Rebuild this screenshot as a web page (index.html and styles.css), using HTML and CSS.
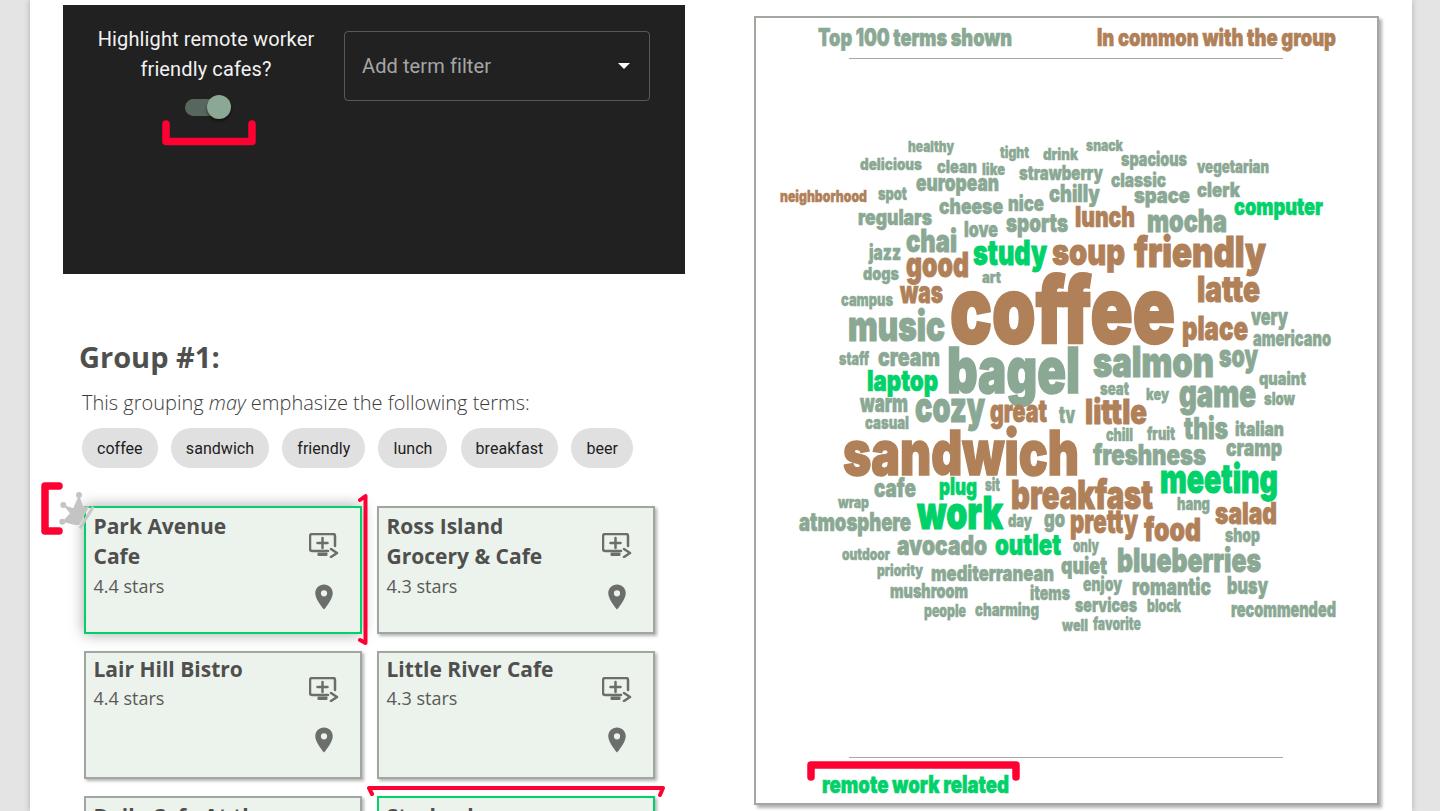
FILE: index.html
```html
<!DOCTYPE html>
<html lang="en">
<head>
    <meta charset="UTF-8">
    <meta name="viewport" content="width=device-width, initial-scale=1.0">
    <title>Cafe Groups</title>
    <link rel="stylesheet" href="styles.css">
</head>
<body>
    <svg class="icon-defs" width="0" height="0">
        <symbol id="icon-compare" viewBox="0 0 30 25">
            <path class="line" d="M19 18H3a2 2 0 0 1-2-2V3a2 2 0 0 1 2-2h21a2 2 0 0 1 2 2v10"/>
            <path class="line" d="M13.5 5v10M8.5 10h10"/>
            <path class="line" d="M22 16l6 4-6 4"/>
            <rect x="8.5" y="19.5" width="10" height="3.5" rx="1"/>
        </symbol>
        <symbol id="icon-pin" viewBox="0 0 24 24">
            <path d="M12 2C8.13 2 5 5.13 5 9c0 5.25 7 13 7 13s7-7.75 7-13c0-3.87-3.13-7-7-7zm0 9.5a2.5 2.5 0 0 1 0-5 2.5 2.5 0 0 1 0 5z"/>
        </symbol>
    </svg>

    <div class="sheet">
        <div class="left-col">
            <!-- Filter controls -->
            <div class="panel">
                <div class="toggle-block">
                    <p>Highlight remote worker friendly cafes?</p>
                    <div class="switch"><span class="knob"></span></div>
                </div>
                <div class="select">
                    <span>Add term filter</span>
                    <span class="arrow"></span>
                </div>
            </div>

            <h2>Group #1:</h2>
            <p class="terms-intro">This grouping <em>may</em> emphasize the following terms:</p>
            <div class="chips">
                <span class="chip">coffee</span>
                <span class="chip">sandwich</span>
                <span class="chip">friendly</span>
                <span class="chip">lunch</span>
                <span class="chip">breakfast</span>
                <span class="chip">beer</span>
            </div>

            <!-- Cafe cards -->
            <div class="cards">
                <div class="card highlight selected">
                    <svg class="crown" viewBox="0 0 40 42">
                        <path d="M21 5l4.300 11.700 6-.7L21.300 35H17L4.300 31.700 12 23.300 5.300 15l10 3.300z"/>
                        <circle cx="21" cy="5" r="3"/>
                        <circle cx="5.300" cy="15" r="3"/>
                        <circle cx="4.300" cy="31.700" r="3"/>
                        <path class="band" d="M35.300 16.700L22 38.300"/>
                    </svg>
                    <div class="card-text">
                        <h3>Park Avenue Cafe</h3>
                        <p>4.4 stars</p>
                    </div>
                    <div class="card-icons">
                        <svg class="compare"><use href="#icon-compare"/></svg>
                        <svg class="pin"><use href="#icon-pin"/></svg>
                    </div>
                </div>
                <div class="card">
                    <div class="card-text">
                        <h3>Ross Island Grocery &amp; Cafe</h3>
                        <p>4.3 stars</p>
                    </div>
                    <div class="card-icons">
                        <svg class="compare"><use href="#icon-compare"/></svg>
                        <svg class="pin"><use href="#icon-pin"/></svg>
                    </div>
                </div>
                <div class="card single">
                    <div class="card-text">
                        <h3>Lair Hill Bistro</h3>
                        <p>4.4 stars</p>
                    </div>
                    <div class="card-icons">
                        <svg class="compare"><use href="#icon-compare"/></svg>
                        <svg class="pin"><use href="#icon-pin"/></svg>
                    </div>
                </div>
                <div class="card single">
                    <div class="card-text">
                        <h3>Little River Cafe</h3>
                        <p>4.3 stars</p>
                    </div>
                    <div class="card-icons">
                        <svg class="compare"><use href="#icon-compare"/></svg>
                        <svg class="pin"><use href="#icon-pin"/></svg>
                    </div>
                </div>
                <div class="card">
                    <div class="card-text">
                        <h3>Daily Cafe At the Water</h3>
                        <p>4.2 stars</p>
                    </div>
                </div>
                <div class="card highlight">
                    <div class="card-text">
                        <h3>Starbucks</h3>
                        <p>4.2 stars</p>
                    </div>
                </div>
            </div>
        </div>

        <!-- Word cloud: every word sits at its own spot, so x/y/size are the data -->
        <div class="cloud-box">
            <svg class="cloud" viewBox="756 18 621 785" lengthAdjust="spacingAndGlyphs">
                <line class="rule" x1="849" y1="58.500" x2="1283" y2="58.500"/>
                <line class="rule" x1="849" y1="757.500" x2="1283" y2="757.500"/>
                <text class="sage" x="818" y="46" font-size="24" textLength="194" lengthAdjust="spacingAndGlyphs">Top 100 terms shown</text>
                <text class="tan" x="1097" y="46" font-size="24" textLength="239" lengthAdjust="spacingAndGlyphs">In common with the group</text>
                <text class="green" x="822" y="793" font-size="24" textLength="187" lengthAdjust="spacingAndGlyphs">remote work related</text>

                <text class="sage" x="908" y="152" font-size="15" textLength="46" lengthAdjust="spacingAndGlyphs">healthy</text>
                <text class="sage" x="860" y="170" font-size="16" textLength="62" lengthAdjust="spacingAndGlyphs">delicious</text>
                <text class="sage" x="937" y="173" font-size="18" textLength="40" lengthAdjust="spacingAndGlyphs">clean</text>
                <text class="sage" x="982" y="175" font-size="16" textLength="23" lengthAdjust="spacingAndGlyphs">like</text>
                <text class="sage" x="1000" y="158" font-size="15" textLength="29" lengthAdjust="spacingAndGlyphs">tight</text>
                <text class="sage" x="1043" y="160" font-size="16" textLength="35" lengthAdjust="spacingAndGlyphs">drink</text>
                <text class="sage" x="1086" y="151" font-size="15" textLength="37" lengthAdjust="spacingAndGlyphs">snack</text>
                <text class="sage" x="1019" y="180" font-size="20" textLength="84" lengthAdjust="spacingAndGlyphs">strawberry</text>
                <text class="sage" x="1121" y="166" font-size="19" textLength="66" lengthAdjust="spacingAndGlyphs">spacious</text>
                <text class="sage" x="1197" y="173" font-size="17" textLength="72" lengthAdjust="spacingAndGlyphs">vegetarian</text>
                <text class="sage" x="1111" y="187" font-size="19" textLength="55" lengthAdjust="spacingAndGlyphs">classic</text>
                <text class="sage" x="916" y="191" font-size="24" textLength="83" lengthAdjust="spacingAndGlyphs">european</text>
                <text class="sage" x="1049" y="202" font-size="24" textLength="51" lengthAdjust="spacingAndGlyphs">chilly</text>
                <text class="sage" x="1197" y="197" font-size="20" textLength="43" lengthAdjust="spacingAndGlyphs">clerk</text>
                <text class="sage" x="1134" y="203" font-size="22" textLength="56" lengthAdjust="spacingAndGlyphs">space</text>
                <text class="tan" x="780" y="202" font-size="16" textLength="87" lengthAdjust="spacingAndGlyphs">neighborhood</text>
                <text class="sage" x="878" y="200" font-size="17" textLength="29" lengthAdjust="spacingAndGlyphs">spot</text>
                <text class="sage" x="939" y="214" font-size="22" textLength="64" lengthAdjust="spacingAndGlyphs">cheese</text>
                <text class="sage" x="1008" y="211" font-size="21" textLength="36" lengthAdjust="spacingAndGlyphs">nice</text>
                <text class="green" x="1234" y="215" font-size="24" textLength="89" lengthAdjust="spacingAndGlyphs">computer</text>
                <text class="sage" x="858" y="225" font-size="22" textLength="74" lengthAdjust="spacingAndGlyphs">regulars</text>
                <text class="tan" x="1075" y="227" font-size="28" textLength="60" lengthAdjust="spacingAndGlyphs">lunch</text>
                <text class="sage" x="1147" y="232" font-size="31" textLength="80" lengthAdjust="spacingAndGlyphs">mocha</text>
                <text class="sage" x="1006" y="232" font-size="26" textLength="62" lengthAdjust="spacingAndGlyphs">sports</text>
                <text class="sage" x="964" y="237" font-size="21" textLength="34" lengthAdjust="spacingAndGlyphs">love</text>
                <text class="sage" x="906" y="252" font-size="31" textLength="51" lengthAdjust="spacingAndGlyphs">chai</text>
                <text class="green" x="973" y="265" font-size="34" textLength="74" lengthAdjust="spacingAndGlyphs">study</text>
                <text class="tan" x="1052" y="265" font-size="37" textLength="73" lengthAdjust="spacingAndGlyphs">soup</text>
                <text class="tan" x="1134" y="267" font-size="42" textLength="132" lengthAdjust="spacingAndGlyphs">friendly</text>
                <text class="sage" x="869" y="260" font-size="21" textLength="32" lengthAdjust="spacingAndGlyphs">jazz</text>
                <text class="sage" x="863" y="280" font-size="18" textLength="36" lengthAdjust="spacingAndGlyphs">dogs</text>
                <text class="tan" x="906" y="277" font-size="34" textLength="63" lengthAdjust="spacingAndGlyphs">good</text>
                <text class="sage" x="982" y="283" font-size="15" textLength="19" lengthAdjust="spacingAndGlyphs">art</text>

                <text class="tan" x="950" y="343" font-size="92" textLength="225" lengthAdjust="spacingAndGlyphs">coffee</text>
                <text class="tan" x="1197" y="302" font-size="36" textLength="63" lengthAdjust="spacingAndGlyphs">latte</text>
                <text class="tan" x="900" y="303" font-size="30" textLength="43" lengthAdjust="spacingAndGlyphs">was</text>
                <text class="sage" x="841" y="306" font-size="17" textLength="52" lengthAdjust="spacingAndGlyphs">campus</text>
                <text class="sage" x="848" y="341" font-size="42" textLength="97" lengthAdjust="spacingAndGlyphs">music</text>
                <text class="tan" x="1182" y="340" font-size="33" textLength="66" lengthAdjust="spacingAndGlyphs">place</text>
                <text class="sage" x="1251" y="325" font-size="24" textLength="37" lengthAdjust="spacingAndGlyphs">very</text>
                <text class="sage" x="1253" y="346" font-size="21" textLength="78" lengthAdjust="spacingAndGlyphs">americano</text>
                <text class="sage" x="839" y="365" font-size="18" textLength="30" lengthAdjust="spacingAndGlyphs">staff</text>
                <text class="sage" x="878" y="366" font-size="26" textLength="62" lengthAdjust="spacingAndGlyphs">cream</text>
                <text class="sage" x="947" y="393" font-size="63" textLength="133" lengthAdjust="spacingAndGlyphs">bagel</text>
                <text class="sage" x="1093" y="377" font-size="42" textLength="121" lengthAdjust="spacingAndGlyphs">salmon</text>
                <text class="sage" x="1219" y="367" font-size="31" textLength="39" lengthAdjust="spacingAndGlyphs">soy</text>
                <text class="green" x="867" y="391" font-size="29" textLength="71" lengthAdjust="spacingAndGlyphs">laptop</text>
                <text class="sage" x="1259" y="385" font-size="18" textLength="47" lengthAdjust="spacingAndGlyphs">quaint</text>
                <text class="sage" x="1100" y="395" font-size="17" textLength="29" lengthAdjust="spacingAndGlyphs">seat</text>
                <text class="sage" x="1146" y="400" font-size="16" textLength="23" lengthAdjust="spacingAndGlyphs">key</text>
                <text class="sage" x="1179" y="407" font-size="38" textLength="77" lengthAdjust="spacingAndGlyphs">game</text>
                <text class="sage" x="1264" y="405" font-size="17" textLength="31" lengthAdjust="spacingAndGlyphs">slow</text>
                <text class="sage" x="860" y="412" font-size="25" textLength="48" lengthAdjust="spacingAndGlyphs">warm</text>
                <text class="sage" x="915" y="422" font-size="42" textLength="70" lengthAdjust="spacingAndGlyphs">cozy</text>
                <text class="tan" x="990" y="422" font-size="31" textLength="57" lengthAdjust="spacingAndGlyphs">great</text>
                <text class="sage" x="1059" y="423" font-size="23" textLength="16" lengthAdjust="spacingAndGlyphs">tv</text>
                <text class="tan" x="1085" y="424" font-size="34" textLength="62" lengthAdjust="spacingAndGlyphs">little</text>
                <text class="sage" x="865" y="429" font-size="18" textLength="44" lengthAdjust="spacingAndGlyphs">casual</text>
                <text class="sage" x="1184" y="439" font-size="30" textLength="44" lengthAdjust="spacingAndGlyphs">this</text>
                <text class="sage" x="1235" y="436" font-size="20" textLength="49" lengthAdjust="spacingAndGlyphs">italian</text>
                <text class="sage" x="1106" y="441" font-size="17" textLength="27" lengthAdjust="spacingAndGlyphs">chill</text>
                <text class="sage" x="1147" y="440" font-size="17" textLength="28" lengthAdjust="spacingAndGlyphs">fruit</text>
                <text class="sage" x="1226" y="456" font-size="23" textLength="56" lengthAdjust="spacingAndGlyphs">cramp</text>
                <text class="sage" x="1093" y="465" font-size="28" textLength="113" lengthAdjust="spacingAndGlyphs">freshness</text>

                <text class="tan" x="843" y="475" font-size="62" textLength="236" lengthAdjust="spacingAndGlyphs">sandwich</text>
                <text class="sage" x="874" y="497" font-size="26" textLength="42" lengthAdjust="spacingAndGlyphs">cafe</text>
                <text class="green" x="939" y="495" font-size="24" textLength="38" lengthAdjust="spacingAndGlyphs">plug</text>
                <text class="sage" x="985" y="491" font-size="18" textLength="15" lengthAdjust="spacingAndGlyphs">sit</text>
                <text class="tan" x="1011" y="509" font-size="40" textLength="142" lengthAdjust="spacingAndGlyphs">breakfast</text>
                <text class="green" x="1160" y="493" font-size="40" textLength="118" lengthAdjust="spacingAndGlyphs">meeting</text>
                <text class="sage" x="1177" y="510" font-size="18" textLength="33" lengthAdjust="spacingAndGlyphs">hang</text>
                <text class="sage" x="838" y="508" font-size="16" textLength="31" lengthAdjust="spacingAndGlyphs">wrap</text>
                <text class="sage" x="799" y="531" font-size="26" textLength="112" lengthAdjust="spacingAndGlyphs">atmosphere</text>
                <text class="green" x="917" y="529" font-size="46" textLength="86" lengthAdjust="spacingAndGlyphs">work</text>
                <text class="sage" x="1008" y="527" font-size="18" textLength="24" lengthAdjust="spacingAndGlyphs">day</text>
                <text class="sage" x="1044" y="527" font-size="23" textLength="21" lengthAdjust="spacingAndGlyphs">go</text>
                <text class="tan" x="1070" y="533" font-size="32" textLength="68" lengthAdjust="spacingAndGlyphs">pretty</text>
                <text class="tan" x="1144" y="541" font-size="32" textLength="57" lengthAdjust="spacingAndGlyphs">food</text>
                <text class="tan" x="1215" y="524" font-size="30" textLength="62" lengthAdjust="spacingAndGlyphs">salad</text>
                <text class="sage" x="1225" y="542" font-size="19" textLength="35" lengthAdjust="spacingAndGlyphs">shop</text>
                <text class="sage" x="1073" y="552" font-size="17" textLength="26" lengthAdjust="spacingAndGlyphs">only</text>
                <text class="sage" x="842" y="560" font-size="16" textLength="48" lengthAdjust="spacingAndGlyphs">outdoor</text>
                <text class="sage" x="897" y="555" font-size="27" textLength="90" lengthAdjust="spacingAndGlyphs">avocado</text>
                <text class="green" x="995" y="555" font-size="28" textLength="66" lengthAdjust="spacingAndGlyphs">outlet</text>
                <text class="sage" x="1117" y="572" font-size="33" textLength="144" lengthAdjust="spacingAndGlyphs">blueberries</text>
                <text class="sage" x="877" y="576" font-size="15" textLength="46" lengthAdjust="spacingAndGlyphs">priority</text>
                <text class="sage" x="931" y="581" font-size="22" textLength="123" lengthAdjust="spacingAndGlyphs">mediterranean</text>
                <text class="sage" x="1061" y="574" font-size="24" textLength="46" lengthAdjust="spacingAndGlyphs">quiet</text>
                <text class="sage" x="1083" y="591" font-size="19" textLength="39" lengthAdjust="spacingAndGlyphs">enjoy</text>
                <text class="sage" x="1132" y="595" font-size="24" textLength="79" lengthAdjust="spacingAndGlyphs">romantic</text>
                <text class="sage" x="1227" y="594" font-size="24" textLength="41" lengthAdjust="spacingAndGlyphs">busy</text>
                <text class="sage" x="890" y="598" font-size="20" textLength="78" lengthAdjust="spacingAndGlyphs">mushroom</text>
                <text class="sage" x="1030" y="600" font-size="20" textLength="40" lengthAdjust="spacingAndGlyphs">items</text>
                <text class="sage" x="1075" y="612" font-size="20" textLength="62" lengthAdjust="spacingAndGlyphs">services</text>
                <text class="sage" x="1147" y="612" font-size="17" textLength="34" lengthAdjust="spacingAndGlyphs">block</text>
                <text class="sage" x="1231" y="617" font-size="21" textLength="105" lengthAdjust="spacingAndGlyphs">recommended</text>
                <text class="sage" x="924" y="617" font-size="17" textLength="42" lengthAdjust="spacingAndGlyphs">people</text>
                <text class="sage" x="975" y="616" font-size="18" textLength="64" lengthAdjust="spacingAndGlyphs">charming</text>
                <text class="sage" x="1062" y="631" font-size="16" textLength="26" lengthAdjust="spacingAndGlyphs">well</text>
                <text class="sage" x="1093" y="630" font-size="17" textLength="48" lengthAdjust="spacingAndGlyphs">favorite</text>
            </svg>
        </div>
    </div>

    <!-- Red marker strokes drawn over the page -->
    <svg class="marks" viewBox="0 0 1440 811">
        <path class="thick" d="M166 124V141.500H252V124"/>
        <path class="thick" d="M59 486H45V531H59"/>
        <path class="thin" d="M360 500L365.500 496V643L360 640"/>
        <path class="thin" d="M372 794L369 788H663L660 795"/>
        <path class="thick" d="M811 777V765H1016V777"/>
    </svg>
</body>
</html>
```

FILE: styles.css
```css
body {
    margin: 0;
    height: 811px;
    overflow: hidden;
    background-color: #e4e4e4;
    font-family: "Open Sans", sans-serif;
    color: #4f504e;
}

.icon-defs {
    position: absolute;
}

.sheet {
    display: flex;
    margin: 0 28px 0 30px;
    height: 811px;
    background-color: #fff;
    box-shadow: 0 0 6px rgba(0, 0, 0, 0.25);
    overflow: hidden;
}

.left-col {
    width: 622px;
    margin-left: 33px;
    padding-top: 5px;
    flex-shrink: 0;
}

.panel {
    display: flex;
    box-sizing: border-box;
    height: 269px;
    padding: 19px 35px 0 28px;
    background-color: #212121;
    font-family: Roboto, sans-serif;
}

.toggle-block {
    width: 230px;
    margin-right: 23px;
    text-align: center;
    flex-shrink: 0;
}

.toggle-block p {
    margin: 0;
    padding: 0 5px;
    font-size: 20px;
    line-height: 30px;
    letter-spacing: 0.13px;
    color: #f2f2f2;
}

.switch {
    position: relative;
    width: 45px;
    height: 17px;
    margin: 15px auto 0 94px;
    border-radius: 9px;
    background-color: #58675e;
}

.knob {
    position: absolute;
    top: -4px;
    right: -1px;
    width: 24px;
    height: 24px;
    border-radius: 50%;
    background-color: #8aa893;
    box-shadow: 0 2px 3px rgba(0, 0, 0, 0.5);
}

.select {
    display: flex;
    align-items: center;
    justify-content: space-between;
    box-sizing: border-box;
    width: 306px;
    height: 70px;
    margin-top: 7px;
    padding: 0 19px 0 17px;
    border: 1px solid rgba(255, 255, 255, 0.25);
    border-radius: 4px;
    font-size: 20px;
    letter-spacing: 0.1px;
    color: #a6a6a6;
}

.arrow {
    width: 0;
    height: 0;
    border-left: 6px solid transparent;
    border-right: 6px solid transparent;
    border-top: 6px solid #fff;
}

h2 {
    margin: 64px 0 0 16px;
    font-size: 29px;
    line-height: 38px;
    font-weight: 700;
}

.terms-intro {
    margin: 13px 0 0 19px;
    font-size: 20px;
    line-height: 28px;
    font-weight: 300;
    color: #3c3c3a;
}

.chips {
    display: flex;
    gap: 13.2px;
    margin: 11px 0 0 19px;
}

.chip {
    display: flex;
    align-items: center;
    height: 40px;
    padding: 0 15px;
    border-radius: 20px;
    background-color: #e0e0e0;
    font-family: Roboto, sans-serif;
    font-size: 16px;
    letter-spacing: 0.04px;
    color: #212121;
}

.cards {
    display: grid;
    grid-template-columns: 278px 278px;
    grid-auto-rows: 128px;
    gap: 17px 15px;
    margin: 38px 0 0 21px;
}

.card {
    position: relative;
    display: flex;
    justify-content: space-between;
    box-sizing: border-box;
    padding: 3px 21px 0 7.5px;
    border: 2px solid #a2a6a0;
    background-color: #ecf2ec;
    box-shadow: 2px 2px 3px rgba(0, 0, 0, 0.3);
}

.card.highlight {
    border-color: #00d168;
}

.card.selected {
    box-shadow: 0 0 14px rgba(0, 0, 0, 0.35);
}

.card-text {
    width: 175px;
}

.card-text h3 {
    margin: 0;
    font-size: 21px;
    line-height: 30px;
    font-weight: 700;
}

.card-text p {
    margin: 0;
    font-size: 18px;
    line-height: 30px;
    font-weight: 400;
    color: #5a5b58;
}

.card.single h3 {
    margin-bottom: 1px;
    line-height: 26px;
}

.card-icons {
    display: flex;
    flex-direction: column;
    align-items: center;
    padding-top: 22px;
    fill: #6b6e6a;
}

.card.single .card-icons {
    padding-top: 21px;
}

.compare {
    width: 30px;
    height: 25px;
}

.compare + .pin {
    margin-top: 24px;
}

.card.single .compare + .pin {
    margin-top: 23px;
}

.pin {
    width: 30px;
    height: 30px;
}

.line {
    fill: none;
    stroke: #6b6e6a;
    stroke-width: 2.5;
    stroke-linecap: round;
    stroke-linejoin: round;
}

.crown {
    position: absolute;
    left: -28px;
    top: -18px;
    width: 40px;
    height: 42px;
    fill: #c4c4c4;
}

.crown .band {
    fill: none;
    stroke: #c8c8c8;
    stroke-width: 3;
}

.cloud-box {
    box-sizing: border-box;
    width: 625px;
    height: 789px;
    margin: 16px 0 0 69px;
    border: 2px solid #a2a8a0;
    background-color: #fff;
    box-shadow: 3px 3px 3px rgba(0, 0, 0, 0.3);
    flex-shrink: 0;
}

.cloud {
    display: block;
    width: 621px;
    height: 785px;
}

.cloud text {
    font-family: Inter, "Liberation Sans", sans-serif;
    font-weight: 900;
    stroke-width: 0.025em;
}

.sage {
    fill: #8aa893;
    stroke: #8aa893;
}

.tan {
    fill: #b08058;
    stroke: #b08058;
}

.green {
    fill: #00d169;
    stroke: #00d169;
}

.rule {
    stroke: #a8a8a8;
    stroke-width: 1;
}

.marks {
    position: absolute;
    left: 0;
    top: 0;
    width: 1440px;
    height: 811px;
    fill: none;
    stroke: #ff0033;
    stroke-linecap: round;
    stroke-linejoin: round;
    pointer-events: none;
}

.thick {
    stroke-width: 7.5;
}

.thin {
    stroke-width: 4;
}
```
